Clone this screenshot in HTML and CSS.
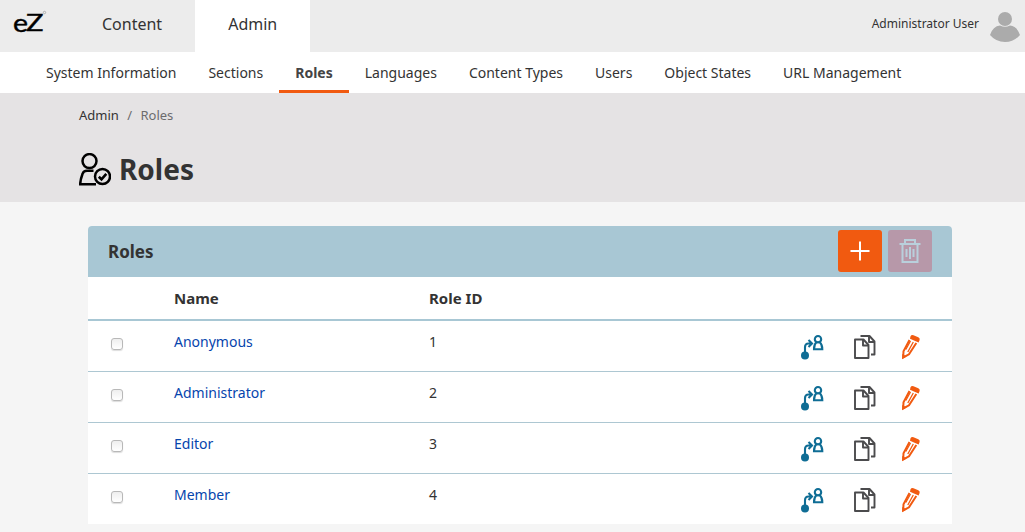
FILE: index.html
```html
<!DOCTYPE html>
<html lang="en">
<head>
<meta charset="utf-8">
<title>Roles</title>
<link rel="stylesheet" href="styles.css">
</head>
<body>
<svg class="defs" width="0" height="0">
  <symbol id="assign" viewBox="0 0 24 26">
    <g fill="none" stroke="#0f6d95" stroke-width="2.100">
      <path d="M4 20V13Q4 9.500 7.500 9.500H10.500M7.500 6L11 9.500L7.500 13"/>
      <circle cx="17" cy="5.200" r="3.200"/>
      <path d="M15.300 8.300Q13 10.500 13 15.200H21.300Q21.300 10.500 18.800 8.300"/>
    </g>
    <circle cx="4" cy="21.500" r="4" fill="#0f6d95"/>
  </symbol>
  <symbol id="copy" viewBox="0 0 22 26">
    <g fill="none" stroke="#4b4b4d" stroke-width="1.900" stroke-linejoin="round">
      <path d="M1 5.500H9.500L14.500 11V24H1Z"/>
      <path d="M9 6V11.500H14.500"/>
      <path d="M6.500 2H15.500L20.500 7.500V20.500H17"/>
      <path d="M15 2.500V8H20"/>
    </g>
  </symbol>
  <symbol id="pencil" viewBox="0 0 20 26">
    <path d="M9.500 2.200Q10.500 .500 12.500 1.200L17.300 3.200Q19.300 4.200 18.600 6L17.600 8.500L9 4.700Z" fill="#f15a10"/>
    <g fill="none" stroke="#f15a10" stroke-width="2">
      <path d="M8.500 6L2.500 17.200L2.200 23.500L8 20.300L15.300 9"/>
      <path d="M12.300 8L6.800 18M9.500 7L4.800 15.500" stroke-width="1.300"/>
    </g>
    <path d="M1.200 20L5.500 22.500L1.200 25Z" fill="#f15a10"/>
  </symbol>
</svg>

<header class="topbar">
  <svg class="logo" width="69" height="52" viewBox="0 0 69 52">
    <text x="13" y="31.500" textLength="15" lengthAdjust="spacingAndGlyphs" class="logo-text">e</text>
    <text x="26" y="31.200" textLength="17.500" lengthAdjust="spacingAndGlyphs" class="logo-text logo-cap">Z</text>
    <circle cx="44.500" cy="12.500" r="1.200" fill="none" stroke="#999" stroke-width=".7"/>
  </svg>
  <nav class="tabs">
    <a class="tab">Content</a>
    <a class="tab tab-active">Admin</a>
  </nav>
  <div class="user">
    <span>Administrator User</span>
    <svg width="30" height="30" viewBox="0 0 30 30" fill="#ababab"><circle cx="15" cy="7" r="7"/><path d="M0 23Q3 14 10 13.500Q15 16 20 13.500Q27 14 30 23Q24 30 15 30T0 23Z"/></svg>
  </div>
</header>

<nav class="subnav">
  <a class="sub">System Information</a>
  <a class="sub">Sections</a>
  <a class="sub sub-active">Roles</a>
  <a class="sub">Languages</a>
  <a class="sub">Content Types</a>
  <a class="sub">Users</a>
  <a class="sub">Object States</a>
  <a class="sub">URL Management</a>
</nav>

<section class="hero">
  <div class="crumbs"><span>Admin</span><span class="muted">/</span><span class="muted">Roles</span></div>
  <h1 class="title">
    <svg width="32" height="33" viewBox="0 0 32 33" fill="none" stroke="#000" stroke-width="2.500">
      <circle cx="10.500" cy="8.100" r="7"/>
      <path d="M14.500 17.800H8Q4.500 17.800 3.500 21Q1.200 27 1.200 31.200H17"/>
      <circle cx="23.500" cy="23.500" r="7.500"/>
      <path d="M19.800 23.800L22.500 26.300L27.300 20.800" stroke-width="2.600"/>
    </svg>
    <span>Roles</span>
  </h1>
</section>

<main class="panel">
  <div class="panel-head">
    <h2 class="panel-title">Roles</h2>
    <button class="btn add" aria-label="Add"><svg width="44" height="42" fill="none" stroke="#fff" stroke-width="2"><path d="M12.500 21H31.500M22 11.500V30.500"/></svg></button>
    <button class="btn trash" aria-label="Delete"><svg width="44" height="42" fill="none" stroke="#b9d0dc" stroke-width="2"><path d="M11.500 14H32.500M17 13V10H27V13M14.500 14V32H29.500V14M18.500 19V27M22 17V29M25.500 19V27"/></svg></button>
  </div>
  <div class="row row-head"><span></span><span>Name</span><span>Role ID</span></div>
  <div class="row"><input class="check" type="checkbox" aria-label="Anonymous"><a class="name">Anonymous</a><span>1</span><div class="actions"><svg width="24" height="26"><use href="#assign"/></svg><svg width="22" height="26"><use href="#copy"/></svg><svg width="20" height="26"><use href="#pencil"/></svg></div></div>
  <div class="row"><input class="check" type="checkbox" aria-label="Administrator"><a class="name">Administrator</a><span>2</span><div class="actions"><svg width="24" height="26"><use href="#assign"/></svg><svg width="22" height="26"><use href="#copy"/></svg><svg width="20" height="26"><use href="#pencil"/></svg></div></div>
  <div class="row"><input class="check" type="checkbox" aria-label="Editor"><a class="name">Editor</a><span>3</span><div class="actions"><svg width="24" height="26"><use href="#assign"/></svg><svg width="22" height="26"><use href="#copy"/></svg><svg width="20" height="26"><use href="#pencil"/></svg></div></div>
  <div class="row"><input class="check" type="checkbox" aria-label="Member"><a class="name">Member</a><span>4</span><div class="actions"><svg width="24" height="26"><use href="#assign"/></svg><svg width="22" height="26"><use href="#copy"/></svg><svg width="20" height="26"><use href="#pencil"/></svg></div></div>
</main>
</body>
</html>
```
FILE: styles.css
```css
* { box-sizing: border-box; }
body {
  margin: 0;
  height: 532px;
  overflow: hidden;
  background: #f5f5f5;
  color: #333;
  font: 14px/21px "Noto Sans", sans-serif;
}
svg { display: block; flex: none; }
.defs { position: absolute; }
.topbar { display: flex; height: 52px; background: #ececec; }
.logo-text { font: 25px Lato, sans-serif; fill: #000; stroke: #000; stroke-width: .4px; }
.logo-cap { font-size: 23.500px; stroke-width: .4px; }
.tabs { display: flex; }
.tab { padding: 0 33px; font-size: 16px; line-height: 48px; }
.tab-active { background: #fff; }
.user {
  display: flex;
  align-items: flex-start;
  gap: 11px;
  margin-left: auto;
  padding: 12px 5px 0 0;
  font-size: 12px;
  line-height: 23px;
}
.subnav { display: flex; height: 41px; padding-left: 30px; background: #fff; }
.sub { height: 41px; padding: 0 16px; line-height: 41px; }
.sub-active { border-bottom: 3px solid #f15a10; font-weight: 700; color: #444; }
.hero { height: 109px; padding: 12px 79px 0; background: #e5e3e4; }
.crumbs { display: flex; gap: 8.400px; font-size: 13px; line-height: 20px; }
.muted { color: #6c6c6e; }
.title {
  display: flex;
  align-items: center;
  gap: 8px;
  height: 40px;
  margin: 24px 0 0;
  font-size: 28px;
  line-height: 40px;
}
.panel { width: 864px; margin: 24px 0 0 88px; background: #fff; border-radius: 4px 4px 0 0; }
.panel-head {
  display: flex;
  gap: 6px;
  height: 51px;
  padding: 4px 20px 5px;
  background: #a8c7d4;
  border-radius: 4px 4px 0 0;
}
.panel-title { margin: 0 auto 0 0; font-size: 17px; line-height: 44px; }
.btn { width: 44px; height: 42px; padding: 0; border: 0; border-radius: 3px; }
.add { background: #f15a10; }
.trash { background: #b798a9; }
.row {
  display: grid;
  grid-template-columns: 63px 255px 372px 1fr;
  height: 51px;
  padding: 10px 0 0 23px;
  border-bottom: 1px solid #adc7d2;
}
.row:last-child { border-bottom: 0; height: 50px; }
.row-head {
  height: 44px;
  padding-top: 11px;
  border-bottom: 2px solid #a8c7d4;
  font-size: 15px;
  font-weight: 700;
}
.check {
  appearance: none;
  width: 12px;
  height: 12px;
  margin: 7px 0 0;
  border: 1px solid #b8b8b8;
  border-radius: 3px;
  background: linear-gradient(#eee, #fff);
  box-shadow: 0 1px 1px #ddd;
}
.name { color: #0645ad; }
.actions { display: flex; padding-top: 3px; }
.actions svg + svg { margin-left: 29px; }
.actions svg:last-child { margin-left: 25px; }
```
